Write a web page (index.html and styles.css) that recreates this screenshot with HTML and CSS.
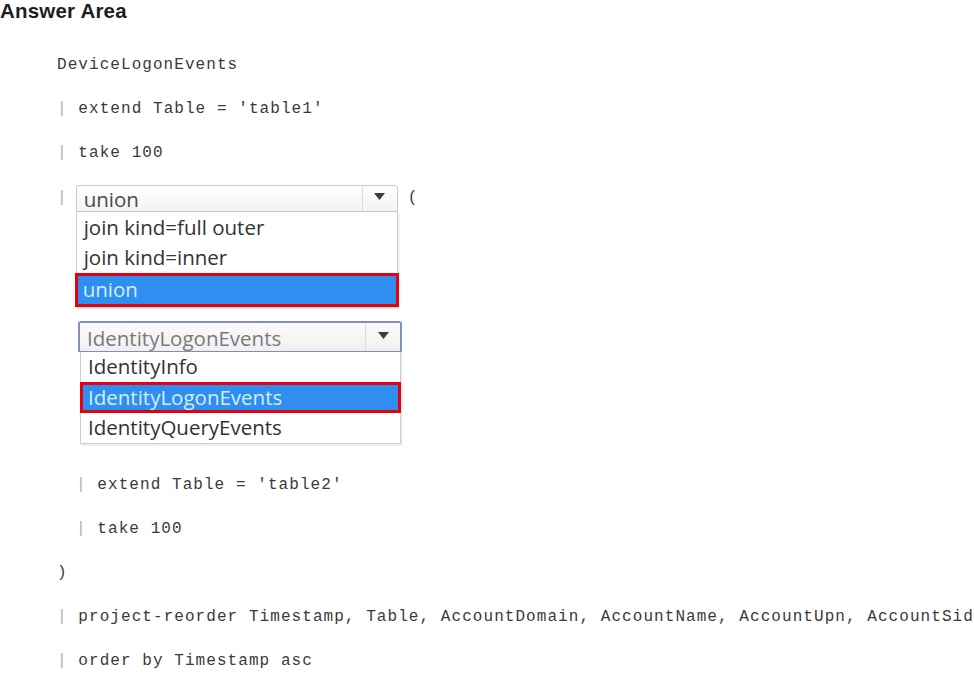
FILE: index.html
```html
<!DOCTYPE html>
<html lang="en">
<head>
    <meta charset="UTF-8">
    <meta name="viewport" content="width=device-width, initial-scale=1.0">
    <title>Answer Area</title>
    <link rel="stylesheet" href="styles.css">
</head>
<body>
    <div class="answer">
        <h1 class="title">Answer Area</h1>

        <div class="code">
            <div class="line">DeviceLogonEvents</div>
            <div class="line"><span class="pipe">|</span> extend Table = 'table1'</div>
            <div class="line"><span class="pipe">|</span> take 100</div>

            <!-- first drop-down: the operator -->
            <div class="pick-row">
                <span class="pipe">|</span>
                <div class="dropdown op-dropdown">
                    <div class="select">
                        <span class="select-value">union</span>
                        <span class="select-btn">
                            <svg width="11" height="7" viewBox="0 0 11 7"><path d="M0 0 H11 L5.5 7 Z" fill="#3c3c3c"/></svg>
                        </span>
                    </div>
                    <ul class="options">
                        <li>join kind=full outer</li>
                        <li>join kind=inner</li>
                        <li class="chosen">union</li>
                    </ul>
                </div>
                <span class="paren">(</span>
            </div>

            <!-- second drop-down: the table -->
            <div class="dropdown table-dropdown">
                <div class="select focused">
                    <span class="select-value muted">IdentityLogonEvents</span>
                    <span class="select-btn">
                        <svg width="11" height="7" viewBox="0 0 11 7"><path d="M0 0 H11 L5.5 7 Z" fill="#3c3c3c"/></svg>
                    </span>
                </div>
                <ul class="options">
                    <li>IdentityInfo</li>
                    <li class="chosen">IdentityLogonEvents</li>
                    <li>IdentityQueryEvents</li>
                </ul>
            </div>

            <div class="line indent first-after"><span class="pipe">|</span> extend Table = 'table2'</div>
            <div class="line indent"><span class="pipe">|</span> take 100</div>
            <div class="line">)</div>
            <div class="line"><span class="pipe">|</span> project-reorder Timestamp, Table, AccountDomain, AccountName, AccountUpn, AccountSid</div>
            <div class="line"><span class="pipe">|</span> order by Timestamp asc</div>
        </div>
    </div>
</body>
</html>
```

FILE: styles.css
```css
:root {
    --code-color: #3a3a3a;
    --pipe-color: #b4aac2;
    --list-border: #cfcfcf;
    --pick-blue: #2f8ff0;
    --pick-red: #e3000f;
}

body {
    margin: 0;
    background-color: #ffffff;
    overflow: hidden;
}

.answer {
    width: 974px;
    height: 673px;
}

.title {
    margin: 0;
    font-family: "Liberation Sans", Arial, sans-serif;
    font-size: 20.5px;
    line-height: 22px;
    font-weight: 700;
    color: #1e1e1e;
    letter-spacing: 0.2px;
}

.code {
    margin-top: 21px;
    padding-left: 57px;
    font-family: "Liberation Mono", "DejaVu Sans Mono", monospace;
    font-size: 16px;
    letter-spacing: 1.06px;
    color: var(--code-color);
}

.line {
    height: 44px;
    line-height: 44px;
    white-space: pre;
}

.line.indent {
    padding-left: 19px;
}

.line.first-after {
    margin-top: 19px;
}

.pipe {
    color: var(--pipe-color);
}

/* row holding the first drop-down */
.pick-row {
    display: flex;
    align-items: flex-start;
    margin-top: 10px;
}

.pick-row .pipe {
    line-height: 27px;
}

.paren {
    line-height: 27px;
    margin-left: 10px;
}

.dropdown {
    font-family: "Open Sans", "Noto Sans", sans-serif;
    font-size: 20.5px;
    letter-spacing: 0;
    color: #333333;
}

.op-dropdown {
    width: 322px;
    margin-left: 8px;
}

.table-dropdown {
    width: 324px;
    margin-top: 13px;
    margin-left: 21px;
}

.select {
    display: flex;
    align-items: stretch;
    box-sizing: border-box;
    height: 27px;
    border: 1px solid #c9c9c9;
    border-radius: 3px 3px 0 0;
    background: linear-gradient(#ffffff, #f3f3f3);
}

.select.focused {
    height: 31px;
    border-color: #7f8ec6;
    border-width: 2px 2px 1px 2px;
    background: linear-gradient(#fbfbfb, #f0f0f0);
}

.select-value {
    flex: 1;
    padding-left: 7px;
    line-height: 27px;
    color: #4a4a4a;
}

.select.focused .select-value {
    line-height: 30px;
}

.select-value.muted {
    color: #7a7a7a;
}

.select-btn {
    width: 34px;
    border-left: 1px solid #dcdcdc;
    display: flex;
    align-items: center;
    justify-content: center;
    padding-bottom: 4px;
}

.options {
    list-style: none;
    margin: 0;
    padding: 1px 0 0 0;
    border: 1px solid var(--list-border);
    border-top: none;
    background-color: #ffffff;
    box-shadow: 1px 1px 2px rgba(0, 0, 0, 0.12);
}

.options li {
    height: 30px;
    line-height: 29px;
    padding-left: 7px;
}

.options li.chosen {
    box-sizing: border-box;
    height: 34px;
    line-height: 27px;
    padding-left: 5px;
    margin: 0 -2px;
    background-color: var(--pick-blue);
    border: 3px solid var(--pick-red);
    color: #d6ecff;
}

.table-dropdown .options {
    margin: 0 1px 0 2px;
    padding-top: 0;
}

.table-dropdown .options li.chosen {
    height: 31px;
    line-height: 24px;
    margin: 0 -1px;
}
```
